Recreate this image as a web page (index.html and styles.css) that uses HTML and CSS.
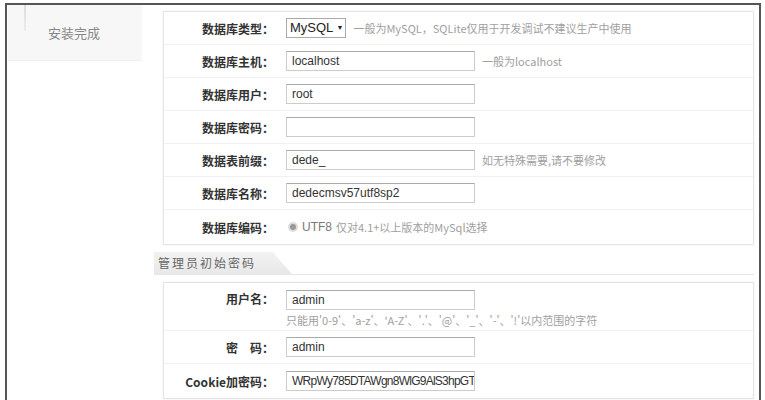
FILE: index.html
```html
<!DOCTYPE html>
<html lang="zh-CN">
<head>
    <meta charset="UTF-8">
    <title>安装 - 数据库设定</title>
    <link rel="stylesheet" href="styles.css">
</head>
<body>
    <div class="frame">
        <div class="side">
            <div class="step">
                <span class="step-line"></span>
                <span class="step-name">安装完成</span>
            </div>
        </div>
        <div class="main">
            <div class="box">
                <div class="row">
                    <div class="label">数据库类型：</div>
                    <div class="field">
                        <span class="select">MySQL <i>▼</i></span>
                        <span class="hint">一般为MySQL，SQLite仅用于开发调试不建议生产中使用</span>
                    </div>
                </div>
                <div class="row">
                    <div class="label">数据库主机：</div>
                    <div class="field"><input class="txt" type="text" value="localhost"><span class="hint">一般为localhost</span></div>
                </div>
                <div class="row">
                    <div class="label">数据库用户：</div>
                    <div class="field"><input class="txt" type="text" value="root"></div>
                </div>
                <div class="row">
                    <div class="label">数据库密码：</div>
                    <div class="field"><input class="txt" type="text" value=""></div>
                </div>
                <div class="row">
                    <div class="label">数据表前缀：</div>
                    <div class="field"><input class="txt" type="text" value="dede_"><span class="hint">如无特殊需要,请不要修改</span></div>
                </div>
                <div class="row">
                    <div class="label">数据库名称：</div>
                    <div class="field"><input class="txt" type="text" value="dedecmsv57utf8sp2"></div>
                </div>
                <div class="row last">
                    <div class="label">数据库编码：</div>
                    <div class="field">
                        <span class="radio"></span>
                        <span class="enc">UTF8</span>
                        <span class="hint tight">仅对4.1+以上版本的MySql选择</span>
                    </div>
                </div>
            </div>

            <div class="section">
                <span class="tab">管理员初始密码</span>
            </div>

            <div class="box">
                <div class="row tall">
                    <div class="label">用户名：</div>
                    <div class="field col">
                        <input class="txt" type="text" value="admin">
                        <span class="hint under">只能用'0-9'、'a-z'、'A-Z'、'.'、'@'、'_'、'-'、'!'以内范围的字符</span>
                    </div>
                </div>
                <div class="row">
                    <div class="label">密&emsp;码：</div>
                    <div class="field"><input class="txt" type="text" value="admin"></div>
                </div>
                <div class="row last">
                    <div class="label">Cookie加密码：</div>
                    <div class="field"><input class="txt narrow" type="text" value="WRpWy785DTAWgn8WlG9AlS3hpGT"></div>
                </div>
            </div>
        </div>
    </div>
</body>
</html>
```

FILE: styles.css
```css
body {
    margin: 0;
    padding: 0;
    background: #fff;
    font-family: "Noto Sans CJK SC", "Liberation Sans", sans-serif;
    font-size: 12px;
    color: #333;
    overflow: hidden;
}
.frame {
    margin: 3px 4px 0 5px;
    height: 420px;
    border-top: 2px solid #555;
    border-left: 2px solid #555;
    border-right: 2px solid #555;
    display: flex;
    align-items: flex-start;
    padding-left: 1px;
}
.side {
    width: 134px;
    height: 55px;
    background: #f7f7f7;
    border-bottom: 1px solid #f0f0f0;
}
.step {
    display: flex;
    align-items: center;
    height: 52px;
    position: relative;
}
.step-line {
    position: absolute;
    left: 16px;
    top: 0;
    width: 2px;
    height: 26px;
    background: linear-gradient(#dcdcdc, #ececec);
}
.step-name {
    margin-left: 40px;
    margin-top: 2px;
    font-size: 13px;
    color: #888;
}
.main {
    width: 591px;
    margin-left: 21px;
    margin-top: 6px;
}
.box {
    border: 1px solid #e4e4e4;
    background: #fff;
    box-shadow: 0 0 2px #f0f0f0;
}
.row {
    display: flex;
    align-items: center;
    height: 32px;
    border-bottom: 1px solid #f1f1f1;
}
.row.last {
    border-bottom: none;
    height: 34px;
}
.row.tall {
    height: 47px;
    align-items: flex-start;
}
.label {
    width: 110px;
    padding-right: 12px;
    text-align: right;
    font-weight: bold;
    color: #333;
    font-size: 12px;
}
.tall .label {
    padding-top: 7px;
}
.field {
    display: flex;
    align-items: center;
}
.field.col {
    flex-direction: column;
    align-items: flex-start;
    padding-top: 7px;
}
.txt {
    width: 182px;
    height: 18px;
    padding: 0 0 0 5px;
    margin: 0;
    border: 1px solid #ccc;
    border-top-color: #aaa;
    font-family: "Liberation Sans", Arial, sans-serif;
    font-size: 12px;
    color: #333;
    outline: none;
}
.txt.narrow {
    letter-spacing: -0.75px;
}
.select {
    display: inline-block;
    height: 18px;
    line-height: 18px;
    padding: 0 2px 0 3px;
    border: 1px solid #aaa;
    font-family: "Liberation Sans", Arial, sans-serif;
    font-size: 13px;
    color: #222;
}
.select i {
    font-style: normal;
    font-size: 7px;
    vertical-align: 2px;
}
.hint {
    margin-left: 7px;
    color: #a0a0a0;
    font-size: 11px;
}
.hint.tight {
    margin-left: 4px;
}
.hint.under {
    margin-left: 0;
    margin-top: 2px;
}
.radio {
    width: 6px;
    height: 6px;
    margin-left: 2px;
    border: 2px solid #ddd;
    border-radius: 50%;
    background: #999;
    box-sizing: content-box;
}
.enc {
    margin-left: 4px;
    font-family: "Liberation Sans", Arial, sans-serif;
    font-size: 12px;
    color: #777;
}
.section {
    margin: 7px 0 7px -9px;
    border-bottom: 1px solid #e8e8e8;
    height: 22px;
}
.tab {
    display: inline-block;
    height: 22px;
    line-height: 22px;
    padding: 0 36px 0 4px;
    background: linear-gradient(#f2f2f2, #e8e8e8);
    clip-path: polygon(0 0, 86% 0, 100% 100%, 0 100%);
    color: #666;
    font-size: 12px;
    letter-spacing: 2px;
}
```
